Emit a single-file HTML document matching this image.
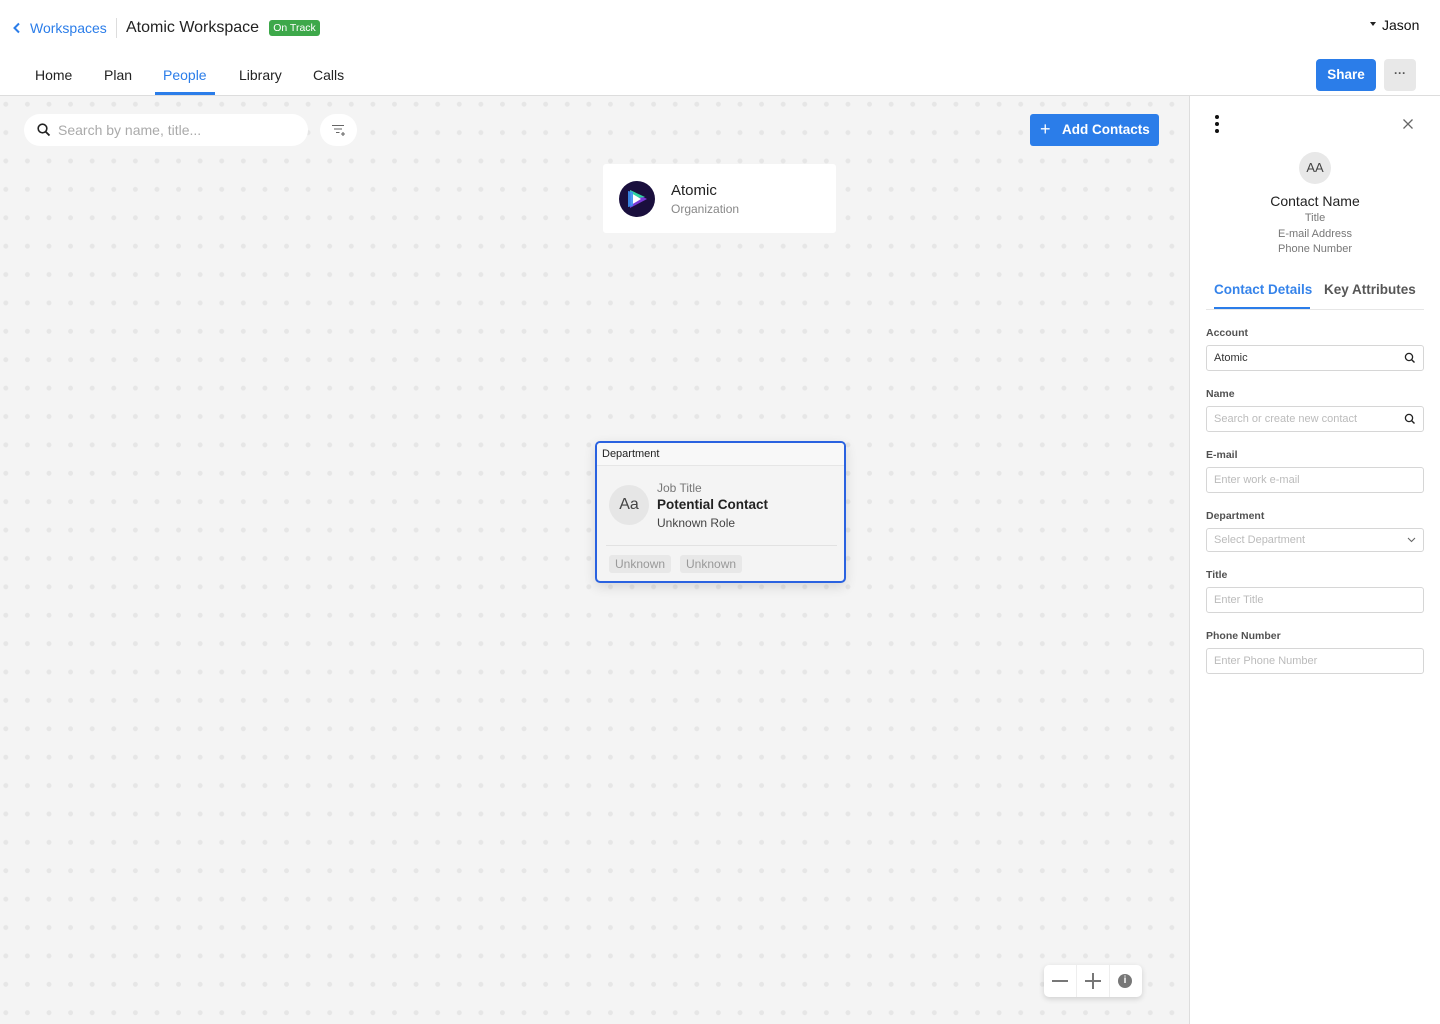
<!DOCTYPE html>
<html><head><meta charset="utf-8"><style>
*{box-sizing:border-box;margin:0;padding:0}
body{width:1440px;height:1024px;overflow:hidden;font-family:"Liberation Sans",sans-serif;background:#fff;color:#222;position:relative}
.abs{position:absolute}
.canvas{left:0;top:96px;width:1189px;height:928px;background-color:#f4f4f4;background-image:radial-gradient(circle,#e6e6e6 2.2px,transparent 2.7px);background-size:21.6px 28.4px;background-position:-5px -6px}
.hdr-line{left:0;top:95px;width:1440px;height:1px;background:#ddd}
.tab{top:67px;font-size:14px;color:#222}
.inp{position:absolute;left:1206px;width:218px;height:26px;border:1px solid #d6d6d6;border-radius:3px;font-size:11px;color:#bbb;padding:6px 7px}
.lbl{position:absolute;left:1206px;font-size:10.5px;color:#333;font-weight:bold;opacity:.85}
</style></head><body>
<div class="abs canvas"></div>
<div class="abs hdr-line"></div>
<svg class="abs" style="left:12px;top:22px" width="10" height="12" viewBox="0 0 10 12"><path d="M7 1.5L2.5 6L7 10.5" stroke="#2b7de9" stroke-width="2" fill="none"/></svg>
<div class="abs" style="left:30px;top:20px;font-size:14px;color:#2b7de9">Workspaces</div>
<div class="abs" style="left:116px;top:18px;width:1px;height:20px;background:#ddd"></div>
<div class="abs" style="left:126px;top:19px;font-size:16px;color:#222">Atomic Workspace</div>
<div class="abs" style="left:269px;top:20px;width:51px;height:16px;background:#3da84a;border-radius:3px;color:#fff;font-size:10.5px;line-height:16px;text-align:center">On Track</div>
<div class="abs" style="left:1370px;top:22px;width:0;height:0;border-left:3px solid transparent;border-right:3px solid transparent;border-top:4px solid #222"></div>
<div class="abs" style="left:1382px;top:17px;font-size:14px;color:#111">Jason</div>
<div class="abs tab" style="left:35px">Home</div>
<div class="abs tab" style="left:104px">Plan</div>
<div class="abs tab" style="left:163px;color:#2b7de9">People</div>
<div class="abs" style="left:155px;top:92px;width:60px;height:3px;background:#2b7de9"></div>
<div class="abs tab" style="left:239px">Library</div>
<div class="abs tab" style="left:313px">Calls</div>
<div class="abs" style="left:1316px;top:59px;width:60px;height:32px;background:#2b7de9;border-radius:4px;color:#fff;font-size:13.5px;font-weight:bold;line-height:32px;text-align:center">Share</div>
<div class="abs" style="left:1384px;top:59px;width:32px;height:32px;background:#e8e8e8;border-radius:4px;color:#555;font-size:12px;line-height:28px;text-align:center;font-weight:bold">···</div>
<div class="abs" style="left:24px;top:114px;width:284px;height:32px;background:#fff;border-radius:16px"></div>
<svg class="abs" style="left:37px;top:123px" width="14" height="14" viewBox="0 0 14 14"><circle cx="5.5" cy="5.5" r="4.3" stroke="#222" stroke-width="1.6" fill="none"/><path d="M8.7 8.7L12.5 12.5" stroke="#222" stroke-width="1.8"/></svg>
<div class="abs" style="left:58px;top:122px;font-size:14px;color:#aaa">Search by name, title...</div>
<div class="abs" style="left:320px;top:114px;width:37px;height:32px;background:#fff;border-radius:16px"></div>
<svg class="abs" style="left:331px;top:123px" width="16" height="14" viewBox="0 0 16 14"><path d="M1 2.5H13M3 6H11M5 9.5H8.5M10 11H14M12 9V13" stroke="#666" stroke-width="1.1" fill="none"/></svg>
<div class="abs" style="left:1030px;top:114px;width:129px;height:32px;background:#2b7de9;border-radius:3px;color:#fff;font-size:13.5px;line-height:32px"><span style="position:absolute;left:10px;top:-1px;font-size:18px">+</span><span style="position:absolute;left:32px;font-weight:bold">Add Contacts</span></div>
<div class="abs" style="left:603px;top:164px;width:233px;height:69px;background:#fff;border-radius:3px"></div>
<svg class="abs" style="left:619px;top:181px" width="36" height="36" viewBox="0 0 36 36"><circle cx="18" cy="18" r="18" fill="#1a0f3d"/><path d="M11 9L28 18L11 27Z" fill="#7a3ad8"/><path d="M11 9L26 16L12 18Z" fill="#2ed3a0"/><path d="M12 12L22 18L12 24Z" fill="#fff"/><path d="M9 10L14 11L14 25L9 26Z" fill="#3a8ff0" opacity=".9"/></svg>
<div class="abs" style="left:671px;top:182px;font-size:15px;color:#222">Atomic</div>
<div class="abs" style="left:671px;top:202px;font-size:12px;color:#888">Organization</div>
<div class="abs" style="left:595px;top:441px;width:251px;height:142px;border:2px solid #2a62e0;border-radius:5px;background:#f4f4f4;box-shadow:0 4px 12px rgba(0,0,0,.12);overflow:hidden">
<div style="height:23px;background:#f8f8f8;border-bottom:1px solid #e6e6e6;font-size:11px;color:#222;padding:5px 5px">Department</div>
<div style="position:absolute;left:12px;top:42px;width:40px;height:40px;border-radius:50%;background:#e6e6e6;font-size:16px;color:#444;text-align:center;line-height:40px">Aa</div>
<div style="position:absolute;left:60px;top:38px;font-size:12px;color:#777">Job Title</div>
<div style="position:absolute;left:60px;top:54px;font-size:13.5px;color:#222;font-weight:bold">Potential Contact</div>
<div style="position:absolute;left:60px;top:73px;font-size:12px;color:#444">Unknown Role</div>
<div style="position:absolute;left:9px;top:102px;width:231px;height:1px;background:#e2e2e2"></div>
<div style="position:absolute;left:12px;top:112px;padding:2px 6px;background:#e8e8e8;border-radius:3px;font-size:12px;color:#999">Unknown</div>
<div style="position:absolute;left:83px;top:112px;padding:2px 6px;background:#e8e8e8;border-radius:3px;font-size:12px;color:#999">Unknown</div>
</div>
<div class="abs" style="left:1044px;top:965px;width:98px;height:32px;background:#fff;border-radius:5px;box-shadow:0 2px 6px rgba(0,0,0,.15)">
<div style="position:absolute;left:32px;top:0;width:1px;height:32px;background:#eee"></div>
<div style="position:absolute;left:65px;top:0;width:1px;height:32px;background:#eee"></div>
<div style="position:absolute;left:8px;top:15px;width:16px;height:2px;background:#777"></div>
<div style="position:absolute;left:41px;top:15px;width:16px;height:2px;background:#777"></div>
<div style="position:absolute;left:48px;top:8px;width:2px;height:16px;background:#777"></div>
<div style="position:absolute;left:74px;top:9px;width:14px;height:14px;border-radius:50%;background:#777;color:#fff;font-size:10px;font-weight:bold;text-align:center;line-height:14px">i</div>
</div>
<div class="abs" style="left:1189px;top:96px;width:1px;height:928px;background:#ddd"></div>
<div class="abs" style="left:1215px;top:115px;width:4px;height:4px;border-radius:50%;background:#111;box-shadow:0 7px 0 #111,0 14px 0 #111"></div>
<svg class="abs" style="left:1402px;top:118px" width="12" height="12" viewBox="0 0 12 12"><path d="M1.5 1.5L10.5 10.5M10.5 1.5L1.5 10.5" stroke="#666" stroke-width="1.3"/></svg>
<div class="abs" style="left:1299px;top:152px;width:32px;height:32px;border-radius:50%;background:#e8e8e8;font-size:13px;color:#444;text-align:center;line-height:32px">AA</div>
<div class="abs" style="left:1190px;width:250px;top:193px;text-align:center;font-size:14px;color:#222">Contact Name</div>
<div class="abs" style="left:1190px;width:250px;top:212px;text-align:center;font-size:11px;color:#777">Title</div>
<div class="abs" style="left:1190px;width:250px;top:228px;text-align:center;font-size:11px;color:#777">E-mail Address</div>
<div class="abs" style="left:1190px;width:250px;top:243px;text-align:center;font-size:11px;color:#777">Phone Number</div>
<div class="abs" style="left:1214px;top:282px;font-size:13.5px;color:#2b7de9;font-weight:bold;opacity:.95">Contact Details</div>
<div class="abs" style="left:1324px;top:282px;font-size:13.5px;color:#444;font-weight:bold;opacity:.9">Key Attributes</div>
<div class="abs" style="left:1206px;top:309px;width:218px;height:1px;background:#e6e6e6"></div>
<div class="abs" style="left:1214px;top:307px;width:96px;height:2px;background:#2b7de9"></div>
<div class="lbl" style="top:327px">Account</div>
<div class="inp" style="top:345px;color:#333">Atomic</div>
<div class="lbl" style="top:388px">Name</div>
<div class="inp" style="top:406px">Search or create new contact</div>
<svg class="abs" style="left:1404px;top:352px" width="12" height="12" viewBox="0 0 12 12"><circle cx="5" cy="5" r="3.6" stroke="#222" stroke-width="1.3" fill="none"/><path d="M7.7 7.7L10.5 10.5" stroke="#222" stroke-width="1.4"/></svg>
<svg class="abs" style="left:1404px;top:413px" width="12" height="12" viewBox="0 0 12 12"><circle cx="5" cy="5" r="3.6" stroke="#222" stroke-width="1.3" fill="none"/><path d="M7.7 7.7L10.5 10.5" stroke="#222" stroke-width="1.4"/></svg>
<div class="lbl" style="top:449px">E-mail</div>
<div class="inp" style="top:467px">Enter work e-mail</div>
<div class="lbl" style="top:510px">Department</div>
<div class="inp" style="top:528px;height:24px;padding-top:5px">Select Department</div>
<svg class="abs" style="left:1407px;top:537px" width="9" height="6" viewBox="0 0 9 6"><path d="M1 1L4.5 4.5L8 1" stroke="#666" stroke-width="1.1" fill="none"/></svg>
<div class="lbl" style="top:569px">Title</div>
<div class="inp" style="top:587px">Enter Title</div>
<div class="lbl" style="top:630px">Phone Number</div>
<div class="inp" style="top:648px">Enter Phone Number</div>
</body></html>
